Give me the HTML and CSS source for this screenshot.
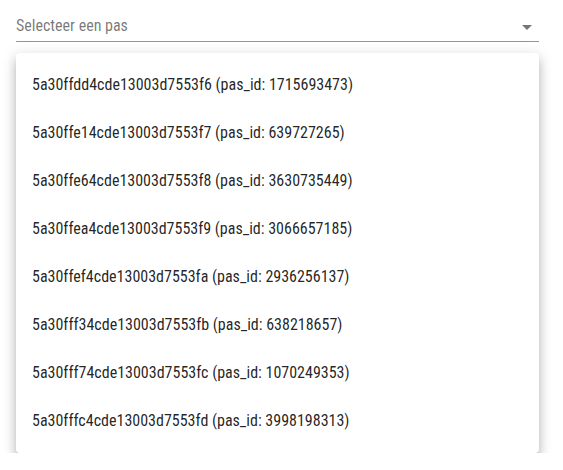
FILE: index.html
```html
<!DOCTYPE html>
<html>
<head>
<meta charset="utf-8">
<link rel="stylesheet" href="styles.css">
</head>
<body>
<div class="field">
  <div class="select">
    <span class="placeholder">Selecteer een pas</span>
    <svg class="arrow" viewBox="0 0 24 24" width="24" height="24"><path d="M7 10l5 5 5-5z"/></svg>
  </div>
</div>
<ul class="menu">
  <li class="item">5a30ffdd4cde13003d7553f6 (pas_id: 1715693473)</li>
  <li class="item">5a30ffe14cde13003d7553f7 (pas_id: 639727265)</li>
  <li class="item">5a30ffe64cde13003d7553f8 (pas_id: 3630735449)</li>
  <li class="item">5a30ffea4cde13003d7553f9 (pas_id: 3066657185)</li>
  <li class="item">5a30ffef4cde13003d7553fa (pas_id: 2936256137)</li>
  <li class="item">5a30fff34cde13003d7553fb (pas_id: 638218657)</li>
  <li class="item">5a30fff74cde13003d7553fc (pas_id: 1070249353)</li>
  <li class="item">5a30fffc4cde13003d7553fd (pas_id: 3998198313)</li>
</ul>
</body>
</html>
```
FILE: styles.css
```css
html, body {
  margin: 0;
  padding: 0;
  background: #fff;
  font-family: Roboto, "Noto Sans", sans-serif;
  font-stretch: 86.5%;
}
.field {
  margin: 10px 0 0 16px;
  width: 523px;
}
.select {
  position: relative;
  display: flex;
  align-items: center;
  padding: 6px 0 6px;
  border-bottom: 1px solid rgba(0, 0, 0, 0.42);
  height: 19px;
}
.placeholder {
  font-size: 16px;
  line-height: 19px;
  color: rgba(0, 0, 0, 0.54);
}
.arrow {
  position: absolute;
  right: 0;
  top: 5px;
  fill: rgba(0, 0, 0, 0.54);
}
.menu {
  list-style: none;
  margin: 11px 0 0 16px;
  padding: 8px 0;
  width: 523px;
  background: #fff;
  border-radius: 4px;
  box-shadow: 0px 5px 5px -3px rgba(0,0,0,0.2), 0px 8px 10px 1px rgba(0,0,0,0.14), 0px 3px 14px 2px rgba(0,0,0,0.12);
}
.item {
  height: 24px;
  padding: 12px 16px;
  font-size: 16px;
  line-height: 24px;
  color: rgba(0, 0, 0, 0.87);
  white-space: nowrap;
}
```
